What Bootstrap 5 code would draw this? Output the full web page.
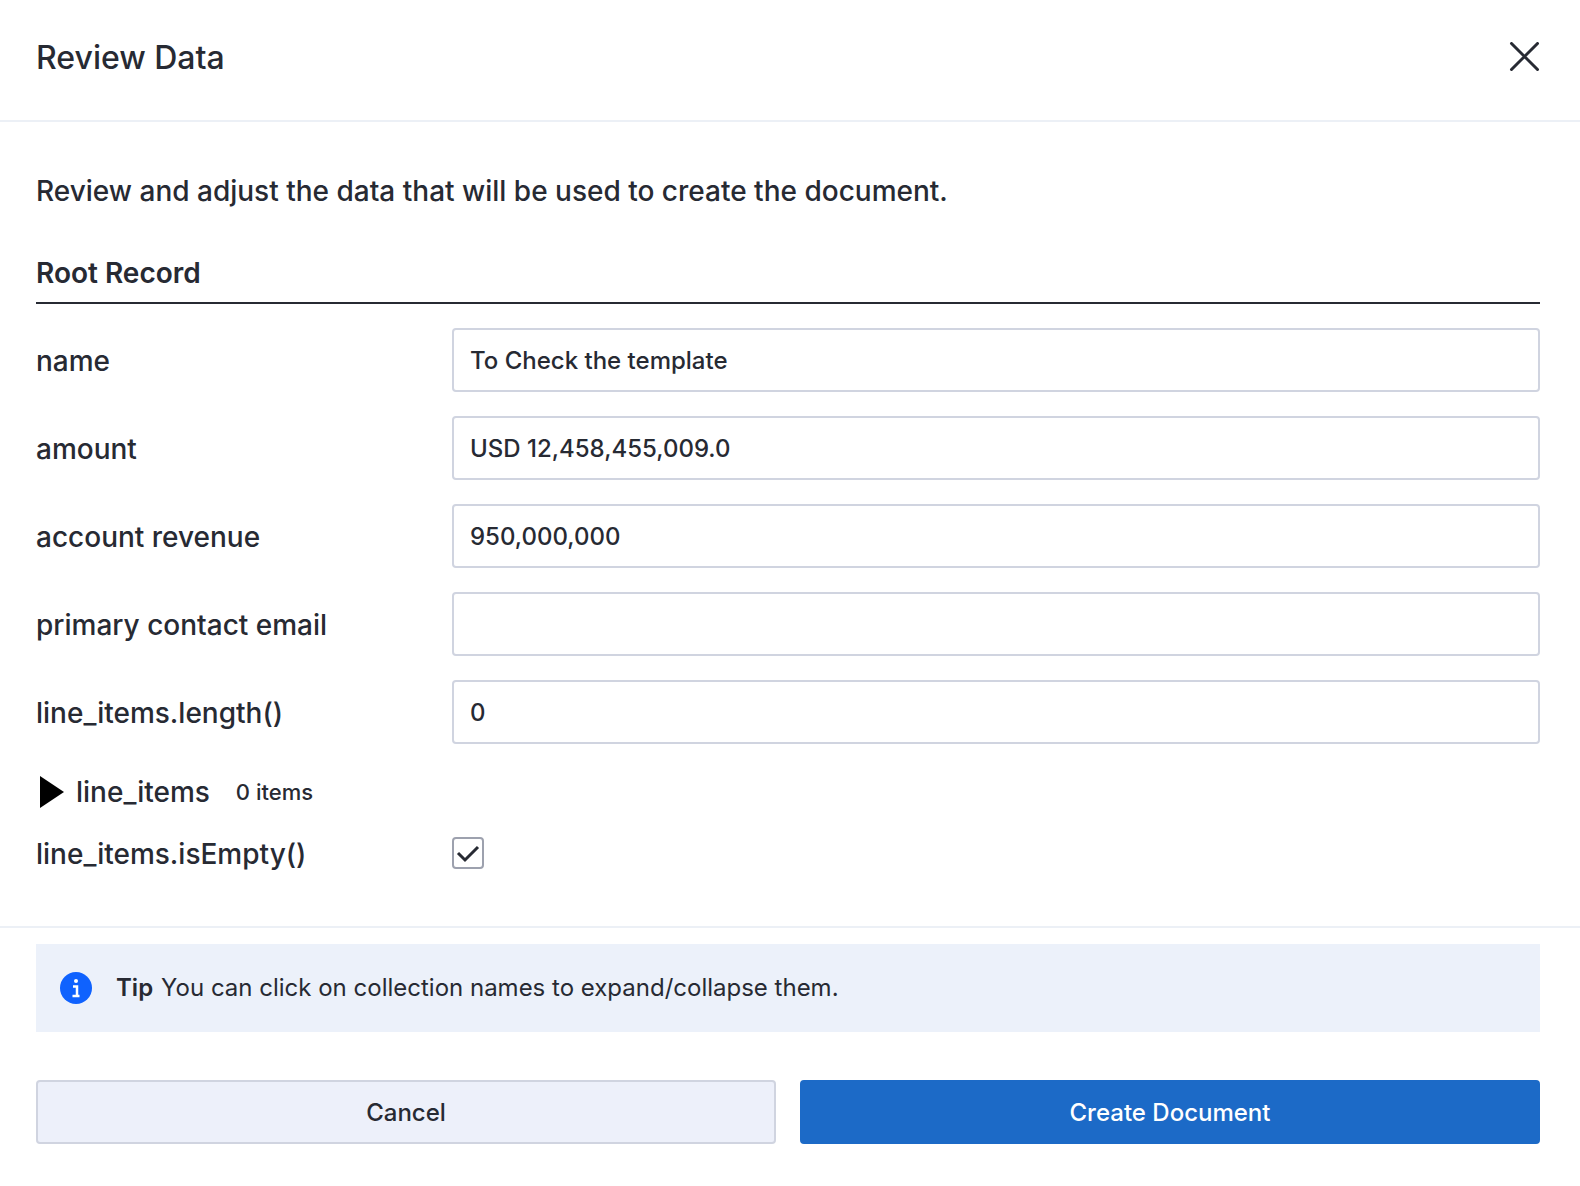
<!DOCTYPE html>
<html lang="en">
<head>
<meta charset="utf-8">
<meta name="viewport" content="width=device-width, initial-scale=1">
<title>Review Data</title>
<link href="https://cdn.jsdelivr.net/npm/bootstrap@5.3.0/dist/css/bootstrap.min.css" rel="stylesheet">
<style>
  body { font-family: Inter, "Liberation Sans", sans-serif; font-size: 28px; line-height: 40px; font-weight: 500; color: #272a33; background: #fff; }
  .review-head { padding: 30px 40px 34px 36px; border-bottom: 2px solid #ecf0f6; }
  .review-title { font-size: 32px; line-height: 56px; font-weight: 500; }
  .close-btn { line-height: 0; color: #272a33; background: none; border: 0; padding: 0; }
  .review-body { padding: 49px 40px 56px 36px; }
  .review-intro { margin-bottom: 42px; }
  .record-title { font-size: 28px; line-height: 40px; font-weight: 600; padding-bottom: 9px; border-bottom: 2px solid #272a33; margin-bottom: 24px; }
  .field-row { margin-bottom: 24px; }
  .field-label { width: 416px; padding-top: 2px; }
  .form-control.field-box { height: 64px; padding: 0 16px; border: 2px solid #d0d4e0; border-radius: 4px; font-size: 24px; font-weight: 500; color: #272a33; min-width: 0; }
  .collection { margin-bottom: 20px; }
  .collection summary { height: 48px; list-style: none; cursor: pointer; padding-left: 4px; }
  .collection summary::-webkit-details-marker { display: none; }
  .collection[open] .marker { transform: rotate(90deg); }
  .marker { margin-right: 12px; }
  .item-count { font-size: 22px; margin-left: 26px; }
  .check-row { height: 34px; }
  .form-check-input.tick { width: 32px; height: 32px; margin: 0; border: 2px solid #9da1ae; border-radius: 4px; }
  .form-check-input.tick:checked { background-color: #fff; border-color: #9da1ae; background-size: 28px 28px; background-image: url("data:image/svg+xml,%3Csvg xmlns='http://www.w3.org/2000/svg' viewBox='0 0 28 28'%3E%3Cpath d='M4 14l7 7L24 8' fill='none' stroke='%23272a33' stroke-width='3'/%3E%3C/svg%3E"); }
  .review-foot { padding: 16px 40px 42px 36px; border-top: 2px solid #ecf0f6; }
  .tip-box { height: 88px; padding: 0 24px; gap: 24px; background: #ecf1fa; font-size: 24px; line-height: 32px; font-weight: 400; margin-bottom: 48px; }
  .tip-box strong { font-weight: 600; margin-right: 8px; }
  .btn.action { height: 64px; border: 2px solid #d0d4e0; border-radius: 4px; font-size: 24px; line-height: 32px; font-weight: 500; padding: 2px 0 0; flex: 1 1 0; }
  .btn.action-cancel { background: #edf0fa; color: #272a33; }
  .btn.action-create { background: #1c6ac7; border-color: #1c6ac7; color: #fff; }
</style>
<script src="https://cdn.jsdelivr.net/npm/bootstrap@5.3.0/dist/js/bootstrap.bundle.min.js"></script>
</head>
<body>
<header class="review-head d-flex align-items-center justify-content-between">
  <h1 class="review-title m-0">Review Data</h1>
  <button type="button" class="close-btn" aria-label="Close">
    <svg width="32" height="32" viewBox="0 0 32 32" fill="none" stroke="currentColor" stroke-width="3" stroke-linecap="round"><path d="M3.500 1.500l26 26M29.500 1.500l-26 26"/></svg>
  </button>
</header>
<form>
  <main class="review-body">
    <p class="review-intro">Review and adjust the data that will be used to create the document.</p>
    <h2 class="record-title">Root Record</h2>
    <div class="field-row d-flex align-items-center">
      <label class="field-label flex-shrink-0" for="f-name">name</label>
      <input class="form-control field-box" id="f-name" type="text" value="To Check the template">
    </div>
    <div class="field-row d-flex align-items-center">
      <label class="field-label flex-shrink-0" for="f-amount">amount</label>
      <input class="form-control field-box" id="f-amount" type="text" value="USD 12,458,455,009.0">
    </div>
    <div class="field-row d-flex align-items-center">
      <label class="field-label flex-shrink-0" for="f-revenue">account revenue</label>
      <input class="form-control field-box" id="f-revenue" type="text" value="950,000,000">
    </div>
    <div class="field-row d-flex align-items-center">
      <label class="field-label flex-shrink-0" for="f-email">primary contact email</label>
      <input class="form-control field-box" id="f-email" type="text" value="">
    </div>
    <div class="field-row d-flex align-items-center">
      <label class="field-label flex-shrink-0" for="f-length">line_items.length()</label>
      <input class="form-control field-box" id="f-length" type="text" value="0">
    </div>
    <details class="collection">
      <summary class="d-flex align-items-center">
        <svg class="marker" width="24" height="32" viewBox="0 0 24 32"><path d="M0 0l24 16L0 32z" fill="#000"/></svg>
        <span>line_items</span>
        <span class="item-count">0 items</span>
      </summary>
    </details>
    <div class="check-row d-flex align-items-center">
      <label class="field-label flex-shrink-0" for="f-empty">line_items.isEmpty()</label>
      <input class="form-check-input tick" id="f-empty" type="checkbox" checked>
    </div>
  </main>
  <footer class="review-foot">
    <div class="tip-box d-flex align-items-center">
      <svg class="flex-shrink-0" width="32" height="32" viewBox="0 0 32 32"><circle cx="16" cy="16" r="16" fill="#0f62fe"/><circle cx="16" cy="9" r="2" fill="#fff"/><path d="M13 14.500h4V24M12.500 24h7" fill="none" stroke="#fff" stroke-width="2.500"/></svg>
      <div><strong>Tip</strong>You can click on collection names to expand/collapse them.</div>
    </div>
    <div class="d-flex gap-4">
      <button type="button" class="btn action action-cancel">Cancel</button>
      <button type="submit" class="btn action action-create">Create Document</button>
    </div>
  </footer>
</form>
</body>
</html>
